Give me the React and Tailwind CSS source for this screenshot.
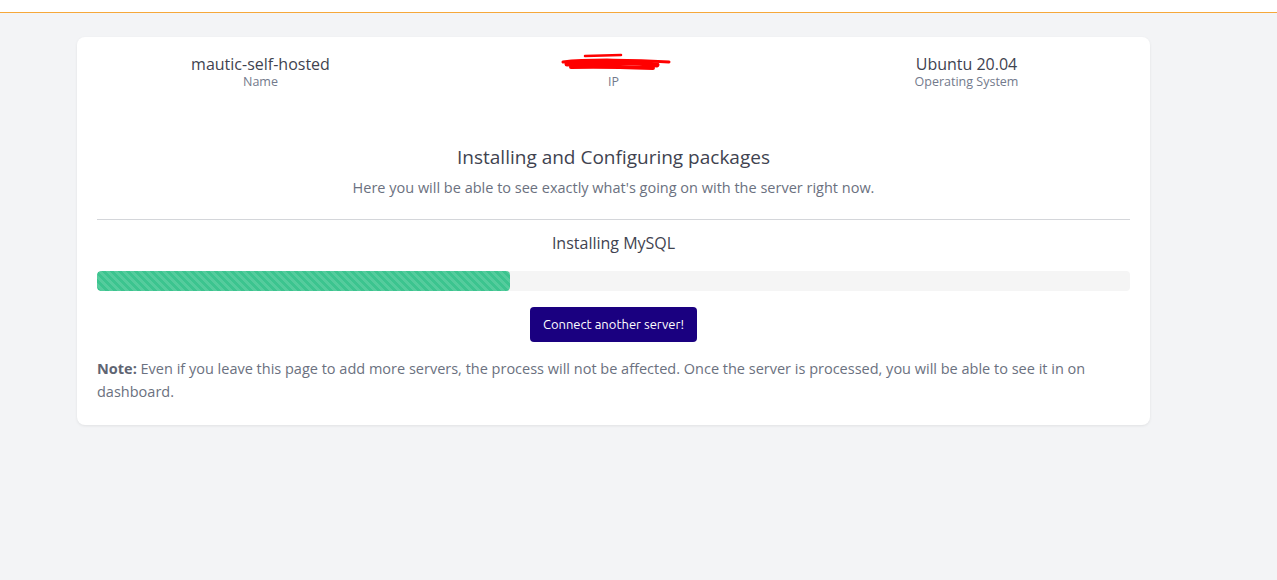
import React from "react";

export default function App() {
  const progress = 40;

  return (
    <div className="min-h-[580px] bg-[#f3f4f6] font-['Open_Sans',sans-serif]">
      {/* Top bar */}
      <div className="h-[13px] bg-white border-b border-[#f6a83a]" />

      <main className="pt-6 pl-[77px] pr-[127px]">
        <div className="bg-white rounded-lg shadow-[0_1px_3px_rgba(0,0,0,0.08)] px-5 pt-4 pb-[22px]">
          {/* Server summary */}
          <div className="grid grid-cols-3 -mx-[13px]">
            <div className="flex flex-col items-center">
              <span className="text-base leading-[22px] text-[#3f4350]">mautic-self-hosted</span>
              <span className="text-[12.5px] leading-[14px] text-[#737a8c]">Name</span>
            </div>
            <div className="flex flex-col items-center">
              <svg width="114" height="22" viewBox="0 0 114 22">
                <path d="M28 3 L64 2" stroke="#ff0000" strokeWidth="2.5" strokeLinecap="round" />
                <path d="M6 9 C30 6, 80 7, 112 9" stroke="#ff0000" strokeWidth="3" strokeLinecap="round" fill="none" />
                <path d="M10 11 C40 9, 80 9, 100 12" stroke="#ff0000" strokeWidth="5" strokeLinecap="round" fill="none" />
                <path d="M14 14 C40 13, 70 14, 96 15" stroke="#ff0000" strokeWidth="4" strokeLinecap="round" fill="none" />
              </svg>
              <span className="text-[12.5px] leading-[14px] text-[#737a8c]">IP</span>
            </div>
            <div className="flex flex-col items-center">
              <span className="text-base leading-[22px] text-[#3f4350]">Ubuntu 20.04</span>
              <span className="text-[12.5px] leading-[14px] text-[#737a8c]">Operating System</span>
            </div>
          </div>

          {/* Title */}
          <div className="mt-[56px] text-center">
            <h2 className="text-[19px] leading-6 text-[#3f4350]">Installing and Configuring packages</h2>
            <p className="mt-[9px] text-[14.5px] leading-5 text-[#6b7180]">
              Here you will be able to see exactly what's going on with the server right now.
            </p>
          </div>

          <hr className="mt-[21px] border-t border-[#d4d6da]" />

          <p className="mt-[12px] text-center text-base leading-[22px] text-[#3f4350]">Installing MySQL</p>

          {/* Progress */}
          <div className="mt-[17px] h-5 rounded bg-[#f5f5f5] overflow-hidden">
            <div
              className="h-full rounded bg-[#3cc48f] bg-[linear-gradient(45deg,rgba(255,255,255,0.13)_25%,transparent_25%,transparent_50%,rgba(255,255,255,0.13)_50%,rgba(255,255,255,0.13)_75%,transparent_75%,transparent)] bg-[length:8px_8px]"
              style={{ width: `${progress}%` }}
            />
          </div>

          <div className="mt-4 flex justify-center">
            <button className="h-[35px] px-[13px] rounded bg-[#1a0080] text-white text-[13px] font-['Ubuntu','Noto_Sans',sans-serif]">
              Connect another server!
            </button>
          </div>

          <p className="mt-[15px] text-[14.5px] leading-[23px] text-[#6b7180]">
            <span className="font-bold text-[#5f6573]">Note:</span> Even if you leave this page to add more servers, the process will not be affected. Once the server is processed, you will be able to see it in on dashboard.
          </p>
        </div>
      </main>
    </div>
  );
}
